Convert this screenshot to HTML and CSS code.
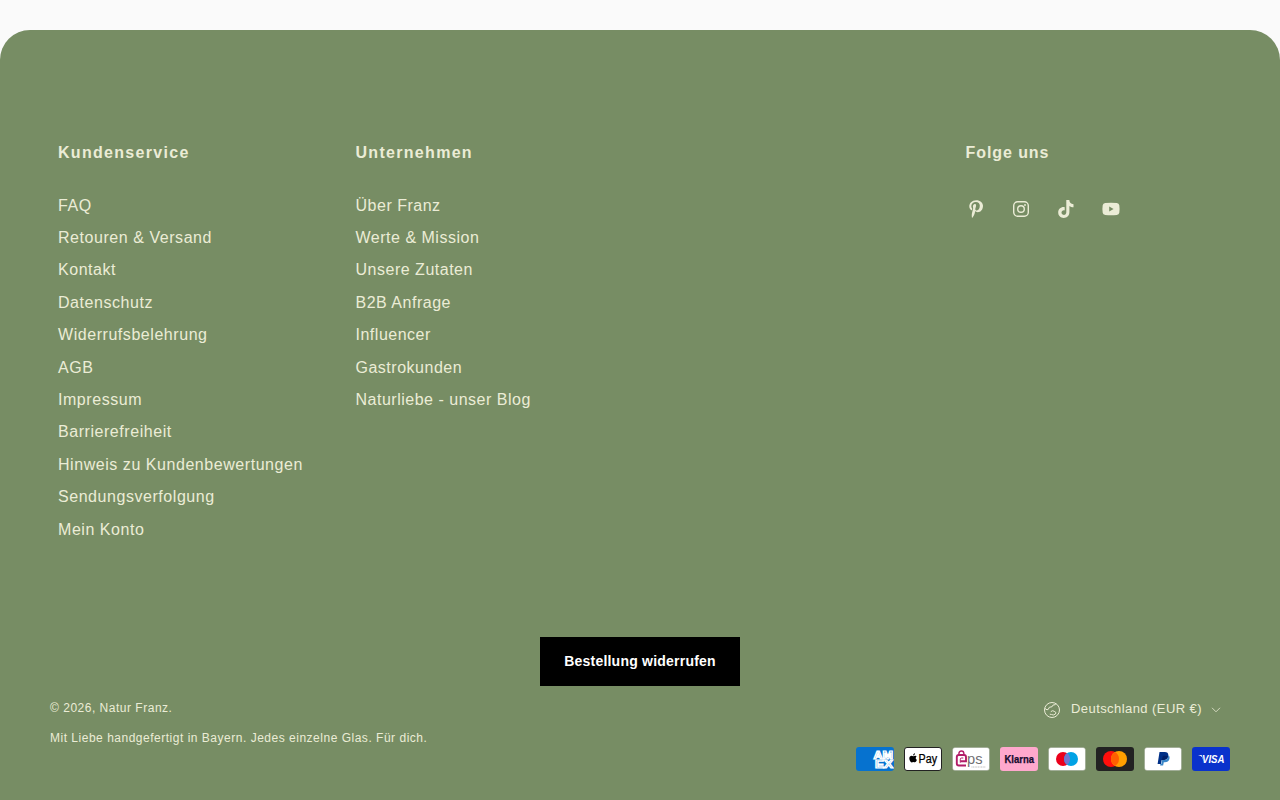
FILE: index.html
```html
<!DOCTYPE html>
<html lang="de">
<head>
<meta charset="utf-8">
<title>Natur Franz</title>
<link rel="stylesheet" href="styles.css">
</head>
<body>
<footer class="footer">
  <div class="columns">
    <section class="column service">
      <h2>Kundenservice</h2>
      <ul>
        <li><a>FAQ</a></li>
        <li><a>Retouren &amp; Versand</a></li>
        <li><a>Kontakt</a></li>
        <li><a>Datenschutz</a></li>
        <li><a>Widerrufsbelehrung</a></li>
        <li><a>AGB</a></li>
        <li><a>Impressum</a></li>
        <li><a>Barrierefreiheit</a></li>
        <li><a>Hinweis zu Kundenbewertungen</a></li>
        <li><a>Sendungsverfolgung</a></li>
        <li><a>Mein Konto</a></li>
      </ul>
    </section>
    <section class="column company">
      <h2>Unternehmen</h2>
      <ul>
        <li><a>Über Franz</a></li>
        <li><a>Werte &amp; Mission</a></li>
        <li><a>Unsere Zutaten</a></li>
        <li><a>B2B Anfrage</a></li>
        <li><a>Influencer</a></li>
        <li><a>Gastrokunden</a></li>
        <li><a>Naturliebe - unser Blog</a></li>
      </ul>
    </section>
    <section class="column follow">
      <h2>Folge uns</h2>
      <div class="social">
        <svg viewBox="0 0 18 18"><path fill="currentColor" d="M9.300.2C4.700.2 2.300 3.300 2.300 6.300c0 1.700.7 3.300 2.100 3.900.3.100.5 0 .5-.3l.3-1c0-.3 0-.4-.2-.6-.4-.5-.7-1.100-.7-2 0-2.400 1.800-4.300 4.600-4.300 2.400 0 3.900 1.500 3.900 3.600 0 2.700-1.200 5-3 5-1 0-1.700-.8-1.500-1.800.3-1.200.8-2.400.8-3.300 0-.8-.4-1.400-1.300-1.400-1 0-1.900 1.100-1.900 2.500 0 .9.300 1.500.3 1.500l-1.300 5.300c-.3 1.400 0 3.900.1 4.300.1.200.2.200.4 0 .2-.3 1.700-2.300 2.200-4l.7-2.600c.3.700 1.400 1.200 2.400 1.200 3.100 0 5.300-2.900 5.300-6.500C16 2.800 13.200.2 9.300.2Z"/></svg>
        <svg viewBox="0 0 18 18"><rect x="1.700" y="1.700" width="14.600" height="14.600" rx="4" fill="none" stroke="currentColor" stroke-width="1.400"/><circle cx="9" cy="9" r="3.300" fill="none" stroke="currentColor" stroke-width="1.400"/><circle cx="13" cy="5" r=".95" fill="currentColor"/></svg>
        <svg viewBox="0 0 18 18"><path fill="currentColor" d="M9.300 0h3c.2 2.400 1.600 4 4.200 4.200v3c-1.600 0-3-.5-4.100-1.300v6.200c0 3.600-2.300 5.900-5.700 5.900-3.300 0-5.500-2.300-5.500-5.400 0-3.500 2.900-6 6.500-5.400v3.200c-1.700-.5-3.200.6-3.200 2.200 0 1.300 1 2.300 2.300 2.300 1.500 0 2.500-1.100 2.500-2.700Z"/></svg>
        <svg viewBox="0 0 18 18"><path fill="currentColor" fill-rule="evenodd" d="M3.200 3.100Q9 2.500 14.800 3.100 17 3.300 17.300 5.200 17.900 9 17.300 12.700 17 14.700 14.800 14.900 9 15.500 3.200 14.900 1 14.700.7 12.700.1 9 .7 5.200 1 3.300 3.200 3.100ZM7.200 6.500v5l4.400-2.500Z"/></svg>
      </div>
    </section>
  </div>
  <a class="withdraw">Bestellung widerrufen</a>
  <div class="bottom">
    <div class="legal">
      <p class="copyright">© 2026, Natur Franz.</p>
      <p class="claim">Mit Liebe handgefertigt in Bayern. Jedes einzelne Glas. Für dich.</p>
    </div>
    <div class="settings">
      <div class="country">
        <svg class="globe" viewBox="0 0 18 18" fill="none" stroke="currentColor"><circle cx="9" cy="9" r="7.500"/><path d="M1.800 7.400 4 8.800l1.300-.5 1-2 2.800-.6 1-1.700 2.100-.3.700-1.200M7.800 10.600l1.900-.9 1.500.6 1.700 1.200-.4 1.500-2.200 1-1.700-.5-1.800-.3"/></svg>
        <span>Deutschland (EUR €)</span>
        <svg class="caret" viewBox="0 0 10 6" fill="none" stroke="currentColor"><path d="m1 .8 4 4 4-4"/></svg>
      </div>
      <div class="payments">
        <svg viewBox="0 0 38 24"><rect width="38" height="24" rx="3" fill="#0672cf"/><g class="amex"><text x="17.500" y="11.700" textLength="19.500" lengthAdjust="spacingAndGlyphs">AM</text><text x="19" y="21.200" textLength="18" lengthAdjust="spacingAndGlyphs">EX</text></g></svg>
        <svg viewBox="0 0 38 24"><rect x=".5" y=".5" width="37" height="23" rx="2.500" fill="#fff" stroke="#222"/><path d="M9.200 9.200c.8 0 1.300-.5 2-.4.600 0 1.100.3 1.400.7-1.300.8-1.100 2.700.3 3.300-.4 1.200-1.200 2.500-2 2.500-.6 0-.9-.3-1.600-.3s-1 .4-1.600.4c-1.200 0-2.400-2.200-2.400-3.900 0-1.900 1.100-2.800 2.300-2.800.6 0 1.100.5 1.600.5ZM9.100 8.500C9 7.300 10 6.300 11 6.200c.1 1.200-.8 2.200-1.900 2.300Z"/><text class="pay" x="14.500" y="15.500" textLength="18.500" lengthAdjust="spacingAndGlyphs">Pay</text></svg>
        <svg viewBox="0 0 38 24"><rect x=".5" y=".5" width="37" height="23" rx="2.500" fill="#fff" stroke="#7c8970" stroke-opacity=".4"/><path d="M6.900 8V6.700Q6.900 4 9.400 4T11.900 6.700V8" fill="none" stroke="#b21d68" stroke-width="1.400"/><path d="M14 18.500H6.800Q4.800 18.500 4.800 16.500V10Q4.800 8 6.800 8H12Q14 8 14 10V14.200H8.500" fill="none" stroke="#b21d68" stroke-width="1.900"/><path d="M8.300 15.700V12.300Q8.300 11 9.600 11H11.300" fill="none" stroke="#b21d68" stroke-width="1"/><text class="eps" x="15" y="16.500" textLength="15.500" lengthAdjust="spacingAndGlyphs">ps</text><path d="M19.500 20h14" stroke="#aaa" stroke-width=".8" stroke-dasharray="1 .6"/></svg>
        <svg viewBox="0 0 38 24"><rect width="38" height="24" rx="3" fill="#ffa8cd"/><text class="klarna" x="4.500" y="16" textLength="29.500" lengthAdjust="spacingAndGlyphs">Klarna</text></svg>
        <svg viewBox="0 0 38 24"><rect x=".5" y=".5" width="37" height="23" rx="2.500" fill="#fff" stroke="#7c8970" stroke-opacity=".4"/><circle cx="15" cy="12" r="7" fill="#eb001b"/><circle cx="23" cy="12" r="7" fill="#00a2e5"/><path d="M19 6.250a7 7 0 0 1 0 11.500 7 7 0 0 1 0-11.500Z" fill="#7375cf"/></svg>
        <svg viewBox="0 0 38 24"><rect width="38" height="24" rx="3" fill="#222"/><circle cx="15" cy="12" r="8" fill="#ff0f0c"/><circle cx="23" cy="12" r="8" fill="#ff9f00"/><path d="M19 5.070a8 8 0 0 1 0 13.860 8 8 0 0 1 0-13.860Z" fill="#ff5f00"/></svg>
        <svg viewBox="0 0 38 24"><rect x=".5" y=".5" width="37" height="23" rx="2.500" fill="#fff" stroke="#7c8970" stroke-opacity=".4"/><path d="M15.500 5h5.300c2.700 0 3.900 1.600 3.400 4-.6 2.700-2.400 4-5.100 4h-1.400l-.8 4.100h-3.300Z" fill="#003087"/><path d="M24.400 8.200c1.200.9 1.400 2.200 1 3.700-.6 2.300-2.200 3.300-4.600 3.300h-1l-.7 3.300h-3l.3-1.400h.9l.9-4h1.500c2.700 0 4.300-1.700 4.700-4.900Z" fill="#3986c8"/><path d="M17.700 13.100h1.500c2.500 0 4.300-1.300 4.900-3.800-1.300-.7-3-.7-5.200-.6Z" fill="#012169"/></svg>
        <svg viewBox="0 0 38 24"><rect width="38" height="24" rx="3" fill="#0a32cc"/><path fill="#fff" d="M6 8.100h3.100q.8 0 1 .8l1.600 5.400L10 10.100Q8.600 8.700 6 8.100Z"/><text class="visa" x="10" y="16" textLength="22.500" lengthAdjust="spacingAndGlyphs">VISA</text></svg>
      </div>
    </div>
  </div>
</footer>
</body>
</html>
```

FILE: styles.css
```css
* { box-sizing: border-box; }
body {
  margin: 0;
  padding-top: 30px;
  height: 800px;
  overflow: hidden;
  background: #fafafa;
  color: #ebecd6;
  font-family: "Liberation Sans", Arial, sans-serif;
}
h2, ul, p { margin: 0; padding: 0; }
.footer {
  height: 770px;
  padding: 111px 50px 0;
  border-radius: 30px 30px 0 0;
  background: #778d64;
  display: flex;
  flex-direction: column;
}
.columns {
  display: grid;
  grid-template-columns: 297.5px 610px 1fr;
  height: 496px;
  padding-left: 8px;
}
h2 { font-size: 16px; line-height: 24px; letter-spacing: 1.3px; }
.follow h2 { letter-spacing: .92px; }
.column ul { margin-top: 24.6px; list-style: none; }
.column li {
  height: 32.4px;
  font-size: 16px;
  line-height: 32.4px;
  letter-spacing: .55px;
  white-space: nowrap;
}
.company li { letter-spacing: .51px; }
.social { display: flex; gap: 27px; margin-top: 35px; padding-left: 1px; }
.social svg { width: 18px; height: 18px; }
.withdraw {
  align-self: center;
  width: 200px;
  height: 49px;
  background: #000;
  color: #fff;
  font-size: 14px;
  font-weight: 700;
  line-height: 48px;
  letter-spacing: .22px;
  text-align: center;
}
.bottom { display: flex; justify-content: space-between; }
.legal { padding-top: 12px; font-size: 12px; line-height: 20px; letter-spacing: .51px; }
.claim { margin-top: 10px; }
.settings { display: flex; flex-direction: column; align-items: flex-end; padding-top: 12px; }
.country {
  display: flex;
  align-items: center;
  height: 22px;
  padding-right: 9px;
  font-size: 13px;
  letter-spacing: .43px;
}
.country span { padding-bottom: 2px; }
.globe { width: 18px; height: 18px; margin: 2px 10px 0 0; }
.caret { width: 10px; height: 6px; margin: 2px 0 0 9px; opacity: .8; }
.payments { display: flex; gap: 10px; margin-top: 27px; }
.payments svg { display: block; width: 38px; height: 24px; }
.amex { font-size: 11px; font-weight: 700; fill: #0672cf; stroke: #fff; stroke-width: 1.2px; }
.pay { font-family: "Liberation Sans", sans-serif; font-size: 12px; fill: #000; stroke: #000; stroke-width: .25px; }
.eps { font-family: "Liberation Sans", sans-serif; font-size: 15px; fill: #706f73; }
.klarna { font-family: "Liberation Sans", sans-serif; font-size: 10px; font-weight: 700; fill: #170b2f; stroke: #170b2f; stroke-width: .25px; }
.visa { font-family: "Liberation Sans", sans-serif; font-size: 11px; font-style: italic; font-weight: 700; fill: #fff; }
```
